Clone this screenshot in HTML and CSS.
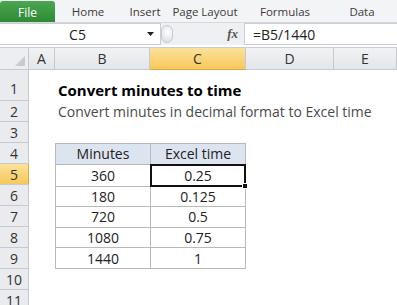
FILE: index.html
```html
<!DOCTYPE html>
<html lang="en">
<head>
  <meta charset="UTF-8" />
  <meta name="viewport" content="width=device-width, initial-scale=1.0" />
  <title>Convert minutes to time</title>
  <link rel="stylesheet" href="styles.css">
</head>
<body>
  <div class="ribbon">
    <div class="tab file">File</div>
    <div class="tab">Home</div>
    <div class="tab">Insert</div>
    <div class="tab">Page Layout</div>
    <div class="tab">Formulas</div>
    <div class="tab">Data</div>
  </div>

  <div class="formula-bar">
    <div class="name-box">
      <span class="name">C5</span>
      <svg class="drop" width="7" height="4" viewBox="0 0 7 4"><path d="M0 0h7L3.5 4z" fill="#222"/></svg>
    </div>
    <div class="grip"></div>
    <div class="fx-area"><span class="fx"><i>f</i>x</span></div>
    <div class="formula">=B5/1440</div>
  </div>

  <div class="sheet">
    <div class="corner"><svg width="10" height="10" viewBox="0 0 10 10"><path d="M10 0v10H0z" fill="#c9cacc"/></svg></div>
    <div class="col-head">A</div>
    <div class="col-head">B</div>
    <div class="col-head active">C</div>
    <div class="col-head">D</div>
    <div class="col-head">E</div>

    <div class="row-head tall">1</div>
    <div class="row-head">2</div>
    <div class="row-head">3</div>
    <div class="row-head">4</div>
    <div class="row-head active">5</div>
    <div class="row-head">6</div>
    <div class="row-head">7</div>
    <div class="row-head">8</div>
    <div class="row-head">9</div>
    <div class="row-head">10</div>
    <div class="row-head">11</div>

    <div class="title">Convert minutes to time</div>
    <div class="subtitle">Convert minutes in decimal format to Excel time</div>

    <div class="data">
      <div class="th">Minutes</div>
      <div class="th">Excel time</div>
      <div class="td">360</div>
      <div class="td selected">0.25<span class="handle"></span></div>
      <div class="td">180</div>
      <div class="td">0.125</div>
      <div class="td">720</div>
      <div class="td">0.5</div>
      <div class="td">1080</div>
      <div class="td">0.75</div>
      <div class="td">1440</div>
      <div class="td">1</div>
    </div>
  </div>
</body>
</html>
```

FILE: styles.css
```css
* {
  box-sizing: border-box;
}
body {
  margin: 0;
  width: 397px;
  height: 305px;
  overflow: hidden;
  background: #fff;
  font-family: "Open Sans", sans-serif;
  color: #222;
}

/* ribbon tabs */
.ribbon {
  display: flex;
  height: 23px;
  background: #f3f4f6;
  border-bottom: 1px solid #d5d9de;
  font-size: 11.5px;
}
.tab {
  display: flex;
  align-items: center;
  justify-content: center;
  padding-top: 1px;
  color: #3b3b3b;
}
.tab:nth-child(2) { width: 66px; }
.tab:nth-child(3) { width: 48px; }
.tab:nth-child(4) { width: 72px; }
.tab:nth-child(5) { width: 88px; }
.tab:nth-child(6) { width: 66px; }
.file {
  width: 55px;
  margin-top: 1px;
  font-size: 12px;
  color: #fff;
  background: linear-gradient(#4aa64f, #2f8a36);
  border-radius: 3px 3px 0 0;
}

/* formula bar */
.formula-bar {
  display: flex;
  height: 22px;
  background: #eef0f3;
}
.name-box {
  display: flex;
  align-items: center;
  width: 161px;
  background: #fff;
  border: 1px solid #c9ced6;
  border-left: none;
  font-size: 14px;
}
.name {
  flex: 1;
  text-align: center;
  padding-left: 8px;
}
.drop {
  margin-right: 6px;
}
.grip {
  width: 12px;
  height: 18px;
  margin: 2px 0 0 0;
  border-radius: 9px;
  background: radial-gradient(circle at 60% 40%, #fff, #d6d9de);
  border: 1px solid #c6cad0;
}
.fx-area {
  display: flex;
  align-items: center;
  justify-content: flex-end;
  width: 71px;
  padding-right: 6px;
}
.fx {
  font-family: "Liberation Serif", serif;
  font-style: italic;
  font-weight: bold;
  font-size: 13px;
  color: #555;
}
.formula {
  flex: 1;
  display: flex;
  align-items: center;
  padding-left: 8px;
  background: #fff;
  border: 1px solid #c9ced6;
  border-right: none;
  font-size: 14px;
}

/* sheet */
.sheet {
  display: grid;
  grid-template-columns: 29px 26px 95px 96px 88px 63px;
  grid-template-rows: 22px 31px repeat(10, 21px);
  margin-top: 2px;
  border-top: 1px solid #c8ccd2;
  font-size: 14px;
}
.corner {
  grid-row: 1;
  grid-column: 1;
  display: flex;
  align-items: flex-end;
  justify-content: flex-end;
  padding: 0 3px 3px 0;
  background: #eceef1;
  border-right: 1px solid #c6c9ce;
  border-bottom: 1px solid #c6c9ce;
}
.col-head {
  grid-row: 1;
  display: flex;
  align-items: center;
  justify-content: center;
  background: linear-gradient(#f1f2f4, #e3e6ea);
  border-right: 1px solid #c6c9ce;
  border-bottom: 1px solid #c6c9ce;
  color: #333;
}
.col-head.active {
  background: linear-gradient(#fbe19a, #f6c95a);
  border-bottom-color: #e0a93c;
}
.row-head {
  grid-column: 1;
  display: flex;
  align-items: center;
  justify-content: center;
  background: #e9ebee;
  border-right: 1px solid #c6c9ce;
  border-bottom: 1px solid #c6c9ce;
  color: #333;
}
.row-head.tall {
  align-items: flex-end;
  padding-bottom: 2px;
}
.row-head.active {
  background: linear-gradient(#fbe19a, #f6c95a);
  border-right-color: #e0a93c;
}
.title {
  grid-row: 2;
  grid-column: 3 / 7;
  align-self: end;
  padding: 0 0 1px 3px;
  font-size: 15px;
  font-weight: bold;
  color: #000;
  white-space: nowrap;
}
.subtitle {
  grid-row: 3;
  grid-column: 3 / 7;
  align-self: center;
  padding-left: 3px;
  color: #4a4a4a;
  white-space: nowrap;
}

/* minutes table */
.data {
  grid-row: 5 / 11;
  grid-column: 3 / 5;
  display: grid;
  grid-template-columns: 1fr 1fr;
  grid-template-rows: repeat(6, 1fr);
  gap: 1px;
  padding: 1px;
  background: #b9b9b9;
}
.th, .td {
  display: flex;
  align-items: center;
  justify-content: center;
  background: #fff;
}
.th {
  background: #dce4ef;
}
.selected {
  position: relative;
  margin: -1px;
  border: 2px solid #111;
}
.handle {
  position: absolute;
  right: -4px;
  bottom: -4px;
  width: 6px;
  height: 6px;
  background: #111;
  border: 1px solid #fff;
}
```
